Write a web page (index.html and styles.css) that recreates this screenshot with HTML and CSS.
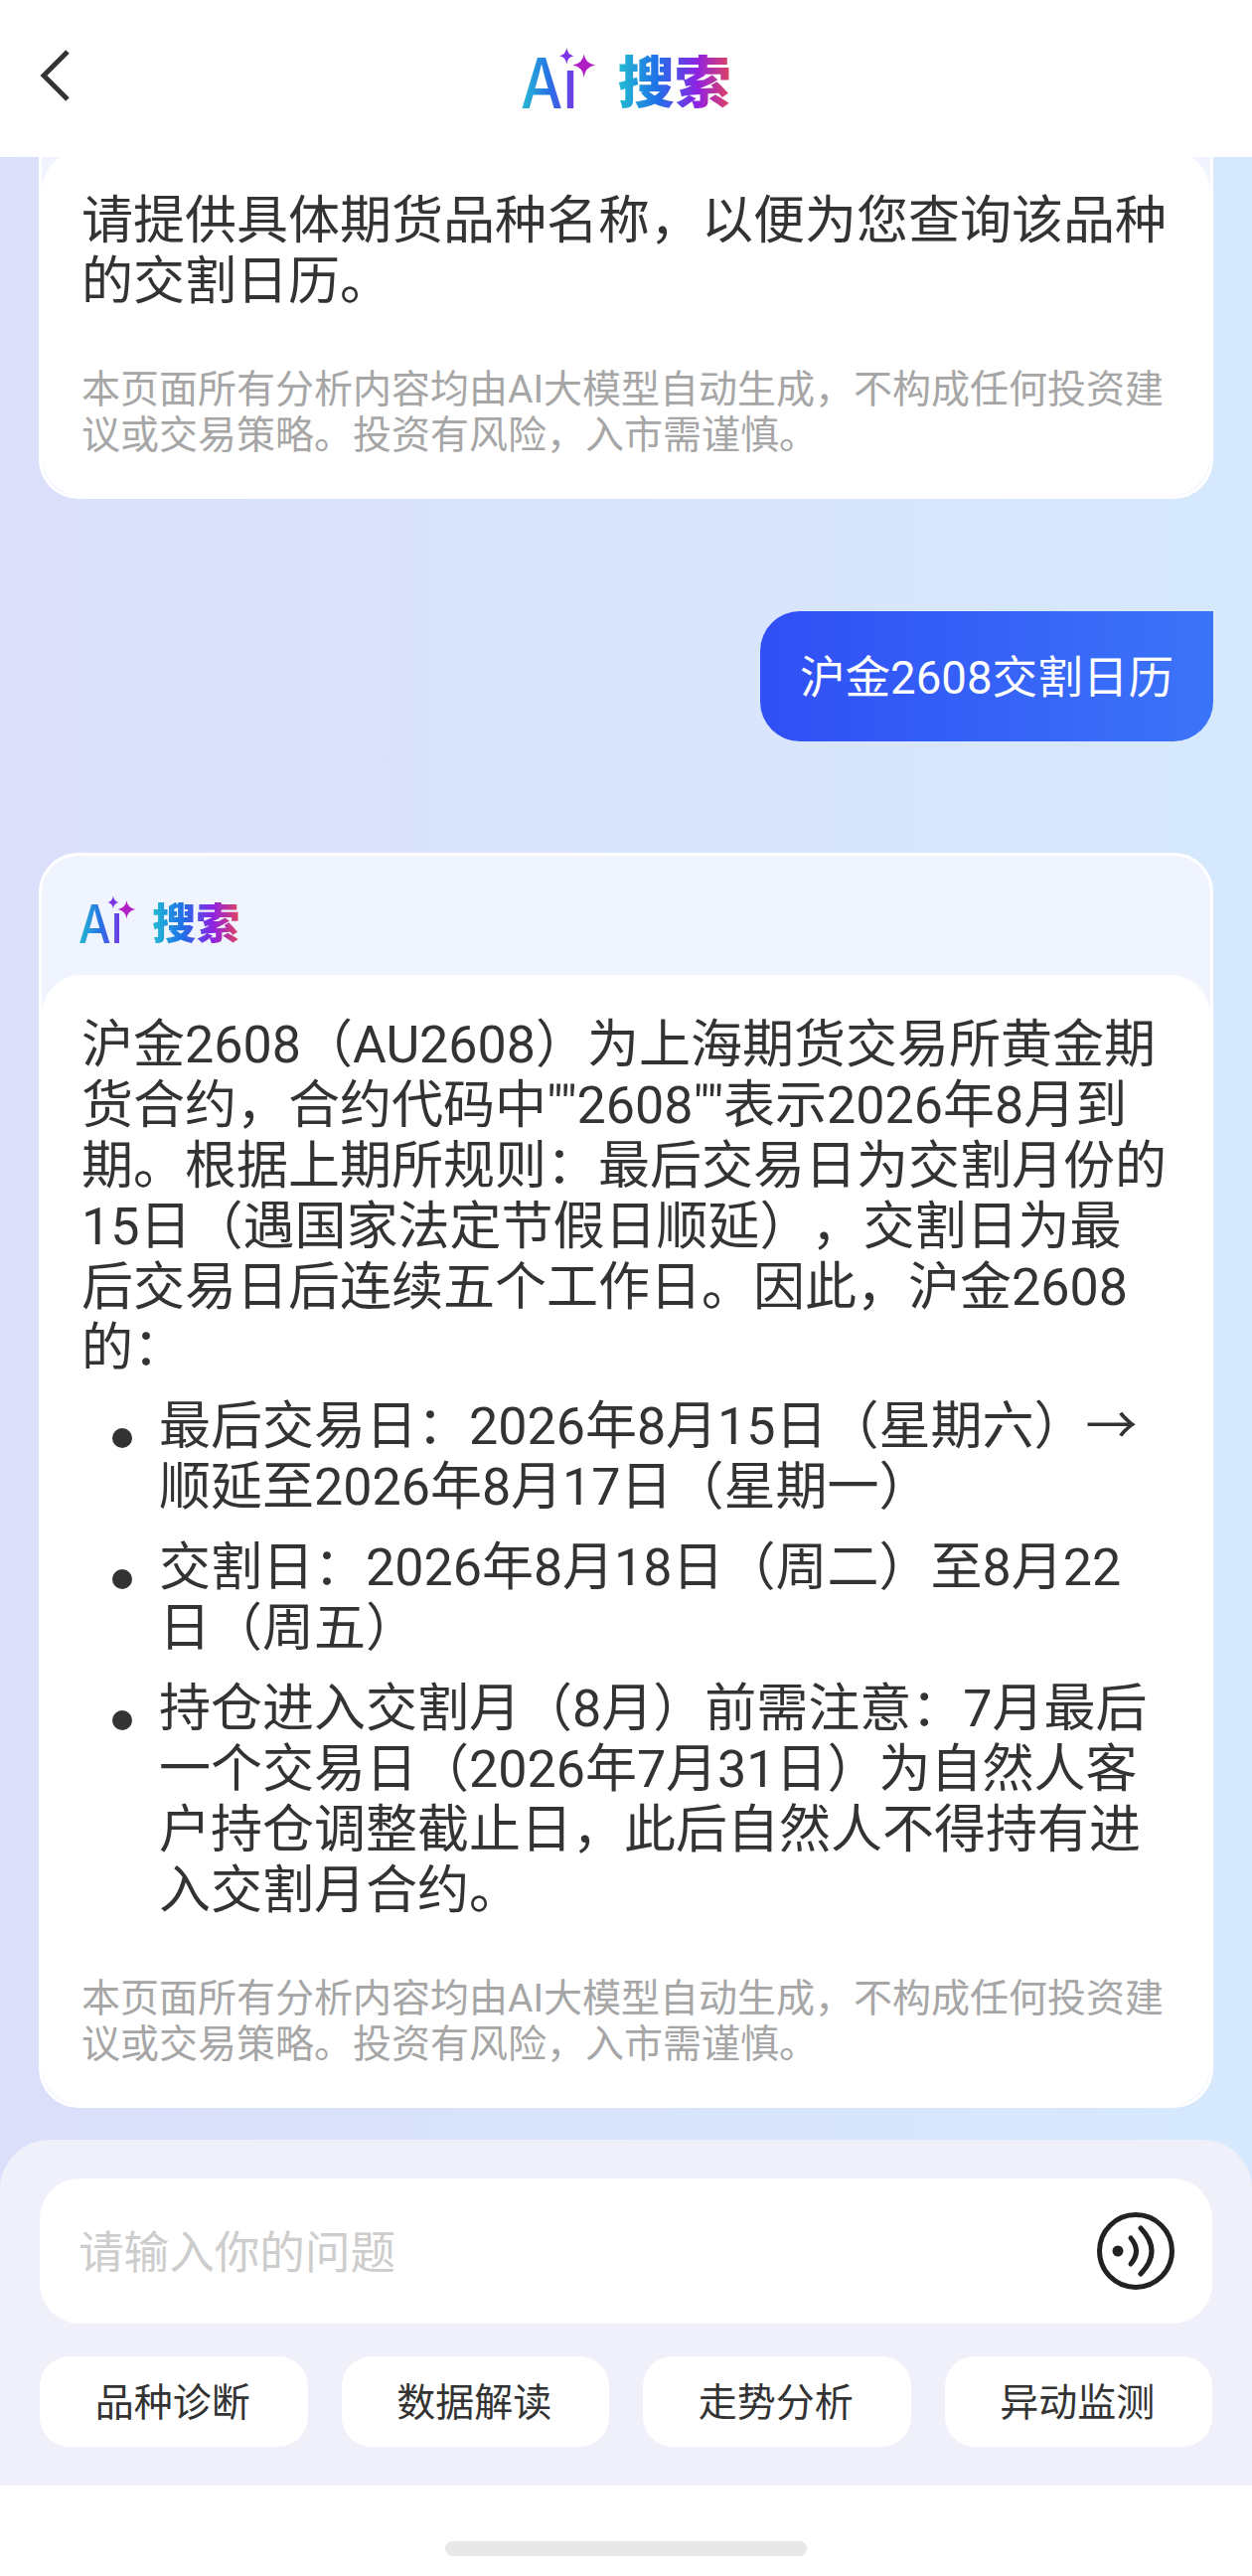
FILE: index.html
```html
<!DOCTYPE html>
<html lang="zh-CN">
<head>
    <meta charset="UTF-8">
    <meta name="viewport" content="width=device-width, initial-scale=1.0">
    <title>AI 搜索</title>
    <link rel="stylesheet" href="styles.css">
</head>
<body>
    <div class="app">
        <header class="topbar">
            <svg class="back" viewBox="0 0 32 54" aria-hidden="true"><path d="M28 3 L4 27 L28 51"/></svg>
            <div class="logo">
                <span class="logo-ai">Aı</span>
                <svg class="logo-stars" viewBox="0 0 40 40" aria-hidden="true">
                    <path class="star-small" d="M10 2 Q11 9 17 10 Q11 11 10 18 Q9 11 3 10 Q9 9 10 2Z"/>
                    <path class="star-big" d="M27 8 Q28 17 38 19 Q28 21 27 31 Q26 21 16 19 Q26 17 27 8Z"/>
                </svg>
                <span class="logo-cn">搜索</span>
            </div>
        </header>

        <main class="messages">
            <section class="answer answer-scrolled">
                <div class="answer-head"></div>
                <div class="answer-body">
                    <p>请提供具体期货品种名称，以便为您查询该品种的交割日历。</p>
                    <p class="notice">本页面所有分析内容均由AI大模型自动生成，不构成任何投资建议或交易策略。投资有风险，入市需谨慎。</p>
                </div>
            </section>

            <div class="question">沪金2608交割日历</div>

            <section class="answer">
                <div class="answer-head">
                    <div class="logo logo-small">
                        <span class="logo-ai">Aı</span>
                        <svg class="logo-stars" viewBox="0 0 40 40" aria-hidden="true">
                            <path class="star-small" d="M10 2 Q11 9 17 10 Q11 11 10 18 Q9 11 3 10 Q9 9 10 2Z"/>
                            <path class="star-big" d="M27 8 Q28 17 38 19 Q28 21 27 31 Q26 21 16 19 Q26 17 27 8Z"/>
                        </svg>
                        <span class="logo-cn">搜索</span>
                    </div>
                </div>
                <div class="answer-body">
                    <p>沪金2608（AU2608）为上海期货交易所黄金期货合约，合约代码中""2608""表示2026年8月到期。根据上期所规则：最后交易日为交割月份的15日（遇国家法定节假日顺延），交割日为最后交易日后连续五个工作日。因此，沪金2608的：</p>
                    <ul>
                        <li><span>最后交易日：2026年8月15日（星期六）→顺延至2026年8月17日（星期一）</span></li>
                        <li><span>交割日：2026年8月18日（周二）至8月22日（周五）</span></li>
                        <li><span>持仓进入交割月（8月）前需注意：7月最后一个交易日（2026年7月31日）为自然人客户持仓调整截止日，此后自然人不得持有进入交割月合约。</span></li>
                    </ul>
                    <p class="notice">本页面所有分析内容均由AI大模型自动生成，不构成任何投资建议或交易策略。投资有风险，入市需谨慎。</p>
                </div>
            </section>
        </main>

        <section class="composer">
            <div class="ask">
                <span class="placeholder">请输入你的问题</span>
                <svg class="voice" viewBox="0 0 80 80" aria-hidden="true">
                    <circle cx="40" cy="40" r="36.5"/>
                    <circle class="voice-dot" cx="22" cy="40" r="5.5"/>
                    <path d="M35 27 Q46 40 35 53"/>
                    <path d="M45 17 Q67 40 45 63"/>
                </svg>
            </div>
            <div class="chips">
                <button class="chip">品种诊断</button>
                <button class="chip">数据解读</button>
                <button class="chip">走势分析</button>
                <button class="chip">异动监测</button>
            </div>
        </section>

        <footer class="home">
            <div class="home-bar"></div>
        </footer>
    </div>
</body>
</html>
```

FILE: styles.css
```css
* {
    box-sizing: border-box;
}

body {
    margin: 0;
    font-family: Roboto, "Noto Sans CJK SC", sans-serif;
    color: #333;
    text-spacing-trim: space-all;
}

p, ul {
    margin: 0;
}

.app {
    width: 1260px;
    height: 2592px;
    display: flex;
    flex-direction: column;
    overflow: hidden;
    background: linear-gradient(90deg, #dbdffb, #d6e9fd);
}

.topbar {
    height: 158px;
    flex: none;
    position: relative;
    z-index: 1;
    padding-top: 10px;
    display: flex;
    align-items: center;
    justify-content: center;
    background: #fff;
}

.back {
    position: absolute;
    left: 40px;
    top: 49px;
    width: 32px;
    height: 54px;
    fill: none;
    stroke: #333;
    stroke-width: 5;
}

/* logo */
.logo {
    font-size: 57px;
    display: flex;
    align-items: center;
    position: relative;
    line-height: 1;
}

.logo-ai {
    font-family: Inter, sans-serif;
    font-size: 1.23em;
    font-weight: 500;
    width: 1em;
    transform: scaleX(.85);
    transform-origin: left center;
    background: linear-gradient(90deg, #23bcd2, #2a6fe6 50%, #7f2fe6);
    -webkit-background-clip: text;
    background-clip: text;
    color: transparent;
}

.logo-stars {
    position: absolute;
    left: .62em;
    top: -.06em;
    width: .72em;
    height: .72em;
}

.star-small {
    fill: #7a35e8;
}

.star-big {
    fill: #b01fc4;
}

.logo-cn {
    font-weight: 900;
    margin-left: .48em;
    background: linear-gradient(90deg, #23bcd2, #1f70e8 35%, #8f22e2 70%, #e2445c);
    -webkit-background-clip: text;
    background-clip: text;
    color: transparent;
}

.logo-small {
    font-size: 44px;
}

.logo-small .logo-cn {
    margin-left: .46em;
}

/* conversation */
.messages {
    flex: 1;
    min-height: 0;
    padding: 0 39px;
    display: flex;
    flex-direction: column;
    align-items: stretch;
    overflow: hidden;
}

.answer {
    flex: none;
    border: 3px solid #fff;
    border-radius: 40px;
    background: #f0f4fe;
}

.answer-scrolled {
    margin-top: -129px;
}

.answer-head {
    height: 120px;
    padding: 42px 37px 0;
}

.answer-body {
    padding: 40px 38px 38px 40px;
    border-radius: 40px;
    background: #fff;
    font-size: 52px;
    line-height: 61px;
}

.answer-body ul {
    padding-left: 31px;
    margin-top: 18px;
    list-style: none;
}

.answer-body li {
    display: flex;
}

.answer-body li::before {
    content: "";
    flex: none;
    width: 20px;
    height: 20px;
    margin: 32px 27px 0 0;
    border-radius: 50%;
    background: #333;
}

.answer-body li + li {
    margin-top: 20px;
}

.notice {
    margin-top: 55px;
    font-size: 39px;
    line-height: 46px;
    color: #a6a6a6;
}

.question {
    flex: none;
    align-self: flex-end;
    margin: 113px 0 112px;
    height: 131px;
    padding: 0 40px 5px;
    display: flex;
    align-items: center;
    border-radius: 40px 0 40px 40px;
    background: linear-gradient(90deg, #304ff5, #3b74f8);
    color: #fff;
    font-size: 45.6px;
}

/* bottom input */
.composer {
    flex: none;
    height: 348px;
    padding: 39px 40px 0;
    border-radius: 50px 50px 0 0;
    background: #eff0f9;
}

.ask {
    height: 146px;
    padding: 0 40px 0 39px;
    display: flex;
    align-items: center;
    justify-content: space-between;
    border-radius: 40px;
    background: #fff;
}

.placeholder {
    font-size: 45.6px;
    margin-bottom: 5px;
    color: #cdcdcd;
}

.voice {
    width: 80px;
    height: 80px;
    margin-right: -3px;
    fill: none;
    stroke: #222;
    stroke-width: 5;
    stroke-linecap: round;
}

.voice-dot {
    fill: #222;
    stroke: none;
}

.chips {
    margin-top: 33px;
    display: flex;
    gap: 34px;
}

.chip {
    flex: 1;
    height: 91px;
    padding: 0 2px 6px 0;
    border: none;
    border-radius: 30px;
    background: #fff;
    font-family: inherit;
    font-size: 39px;
    color: #333;
}

.home {
    height: 91px;
    flex: none;
    display: flex;
    justify-content: center;
    align-items: flex-end;
    padding-bottom: 20px;
    background: #fff;
}

.home-bar {
    width: 364px;
    height: 15px;
    border-radius: 8px;
    background: #e8e8e8;
}
```
